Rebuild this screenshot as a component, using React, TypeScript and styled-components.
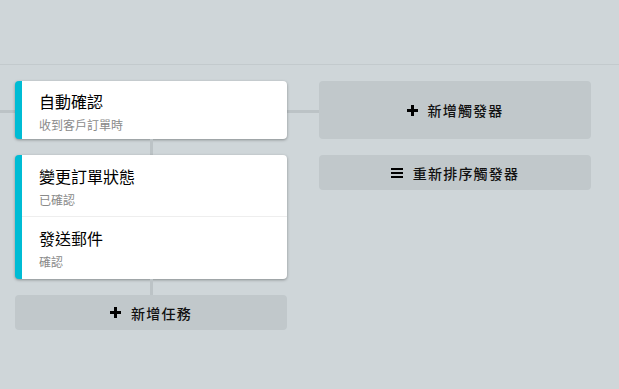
import styled, { createGlobalStyle } from 'styled-components';

const GlobalStyle = createGlobalStyle`
	html, body {
		margin: 0;
		padding: 0;
		background: #cfd6d9;
		font-family: 'Noto Sans CJK TC', 'Noto Sans', Roboto, sans-serif;
	}
`;

const Page = styled.div`
	width: 619px;
	height: 389px;
	background: #cfd6d9;
	overflow: hidden;
`;

const Header = styled.div`
	height: 65px;
	border-bottom: 1px solid #c3cacd;
	box-sizing: border-box;
`;

// trigger line runs from the left edge into the "add trigger" button
const Board = styled.div`
	position: relative;
	display: grid;
	grid-template-columns: 272px 272px;
	column-gap: 32px;
	padding: 16px 15px;
	align-items: start;
	&::before {
		content: '';
		position: absolute;
		left: 0;
		width: 319px;
		top: 45px;
		height: 3px;
		background: #bcc3c6;
		z-index: 0;
	}
`;

const Column = styled.div`
	position: relative;
	z-index: 1;
	display: flex;
	flex-direction: column;
	align-items: stretch;
`;

const Card = styled.div`
	background: #fff;
	border-radius: 4px;
	border-left: 7px solid #00bcd4;
	box-shadow: 0 1px 3px rgba(0, 0, 0, 0.35);
	overflow: hidden;
`;

const Item = styled.div<{ $tall?: boolean }>`
	padding: ${(p) => (p.$tall ? '9px 17px 8px' : '8px 17px 6px')};
	& + & {
		border-top: 1px solid #eeeeee;
	}
	&:last-child {
		padding-bottom: ${(p) => (p.$tall ? '9px' : '6px')};
	}
`;

const Title = styled.div`
	font-size: 16px;
	line-height: 24px;
	color: #000;
`;

const Subtitle = styled.div`
	margin-top: 4px;
	font-size: 12px;
	line-height: 16px;
	color: #8a8a8a;
`;

const Connector = styled.div`
	align-self: center;
	width: 3px;
	height: 16px;
	background: #bcc3c6;
`;

const Gap = styled.div`
	height: 16px;
`;

const Button = styled.button<{ $height: number }>`
	height: ${(p) => p.$height}px;
	border: none;
	border-radius: 4px;
	background: #c1c8cb;
	color: #111;
	font-family: inherit;
	font-size: 14px;
	font-weight: 500;
	letter-spacing: 1.2px;
	display: flex;
	align-items: center;
	justify-content: center;
	gap: 10px;
	padding: 0;
	cursor: pointer;
`;

const Plus = () => (
	<svg width='11' height='11' viewBox='0 0 11 11'>
		<path d='M4 0h3v4h4v3H7v4H4V7H0V4h4z' fill='#000' />
	</svg>
);

const Bars = () => (
	<svg width='12' height='10' viewBox='0 0 12 10'>
		<rect x='0' y='0' width='12' height='2' fill='#000' />
		<rect x='0' y='4' width='12' height='2' fill='#000' />
		<rect x='0' y='8' width='12' height='2' fill='#000' />
	</svg>
);

const actions = [
	{ title: '變更訂單狀態', sub: '已確認' },
	{ title: '發送郵件', sub: '確認' },
];

export default function App() {
	return (
		<Page>
			<GlobalStyle />
			<Header />
			<Board>
				<Column>
					<Card>
						<Item>
							<Title>自動確認</Title>
							<Subtitle>收到客戶訂單時</Subtitle>
						</Item>
					</Card>
					<Connector />
					<Card>
						{actions.map((a) => (
							<Item key={a.title} $tall>
								<Title>{a.title}</Title>
								<Subtitle>{a.sub}</Subtitle>
							</Item>
						))}
					</Card>
					<Connector />
					<Button $height={35}>
						<Plus />
						新增任務
					</Button>
				</Column>
				<Column>
					<Button $height={58}>
						<Plus />
						新增觸發器
					</Button>
					<Gap />
					<Button $height={35}>
						<Bars />
						重新排序觸發器
					</Button>
				</Column>
			</Board>
		</Page>
	);
}
